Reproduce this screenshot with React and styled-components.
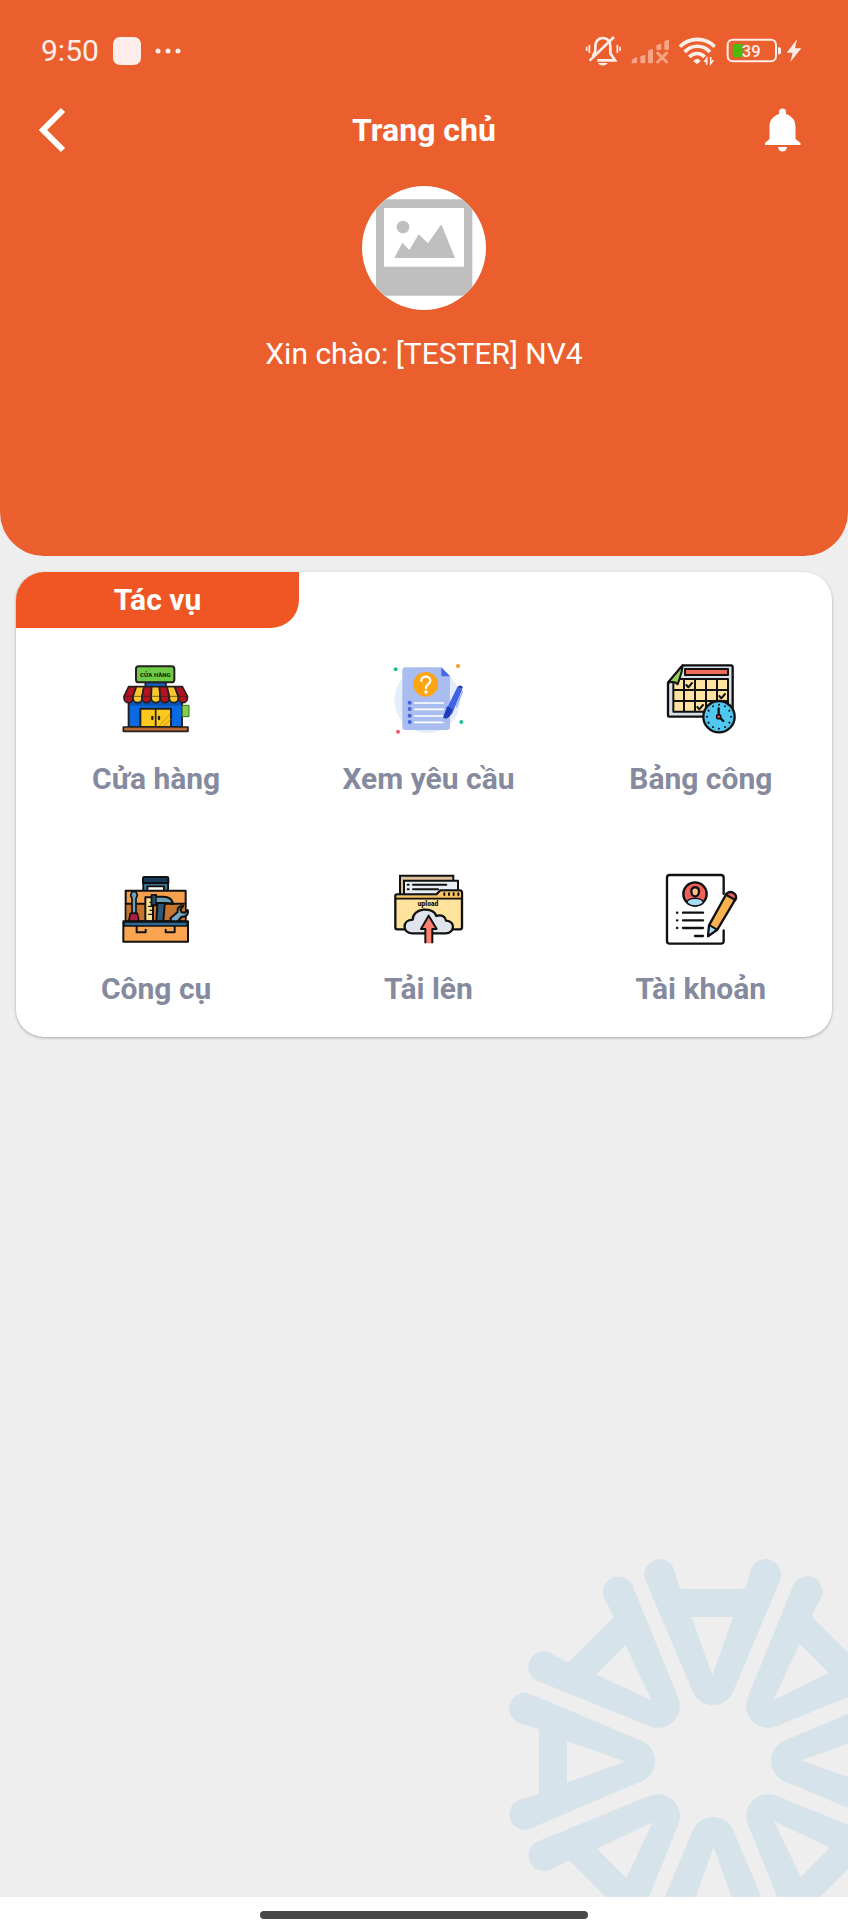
import React from 'react';
import styled, { createGlobalStyle } from 'styled-components';

const GlobalStyle = createGlobalStyle`
  * { box-sizing: border-box; }
  body {
    margin: 0;
    background: #eeeeee;
    font-family: Roboto, "Liberation Sans", sans-serif;
  }
  button { font: inherit; border: 0; padding: 0; background: none; cursor: pointer; }
  svg { display: block; }
`;

const Screen = styled.div`
  min-height: 100vh;
  display: flex;
  flex-direction: column;
`;

const Header = styled.header`
  background: #eb5f2f;
  color: #fff;
  border-radius: 0 0 44px 44px;
  padding-bottom: 182px;
`;

const StatusBar = styled.div`
  height: 101px;
  padding: 0 45px 0 41px;
  display: flex;
  align-items: center;
  justify-content: space-between;
  color: #fdeee9;
`;

const StatusGroup = styled.div`
  display: flex;
  align-items: center;
  gap: ${(p) => p.$gap}px;
`;

const Clock = styled.time`
  font-size: 30px;
  line-height: 40px;
`;

const AppChip = styled.span`
  width: 28px;
  height: 28px;
  border-radius: 7px;
  background: #fdeeeb;
`;

const AppBar = styled.div`
  height: 58px;
  padding: 0 36px;
  display: grid;
  grid-template-columns: 1fr auto 1fr;
  align-items: center;
`;

const BarButton = styled.button`
  color: #fff;
  justify-self: ${(p) => p.$side};
`;

const Title = styled.h1`
  margin: 0;
  font-size: 32px;
  line-height: 40px;
  font-weight: 700;
`;

const Profile = styled.div`
  margin-top: 27px;
  display: flex;
  flex-direction: column;
  align-items: center;
  gap: 24px;
`;

const Avatar = styled.div`
  width: 124px;
  height: 124px;
  border-radius: 50%;
  background: #fff;
  overflow: hidden;
`;

const Greeting = styled.p`
  margin: 0;
  font-size: 30px;
  line-height: 40px;
`;

const Main = styled.main`
  flex: 1;
  position: relative;
  padding: 16px 16px 40px;
`;

const Watermark = styled.svg`
  position: absolute;
  right: 0;
  bottom: 0;
`;

const Card = styled.section`
  position: relative;
  background: #fff;
  border-radius: 28px;
  overflow: hidden;
  box-shadow: 0 1px 3px rgba(0, 0, 0, 0.3);
`;

const CardTitle = styled.h2`
  margin: 0;
  width: 283px;
  background: #f05623;
  color: #fff;
  border-bottom-right-radius: 28px;
  text-align: center;
  font-size: 30px;
  line-height: 56px;
  font-weight: 700;
`;

const TaskGrid = styled.nav`
  display: grid;
  grid-template-columns: repeat(3, 1fr);
  row-gap: 66px;
  margin: 0 -5px 0 4px;
  padding: 27px 0 28px;
`;

const Task = styled.button`
  display: flex;
  flex-direction: column;
  align-items: center;
  gap: 14px;
  color: #858a9e;
  font-size: 30px;
  line-height: 40px;
  font-weight: 700;
`;

const HomeBar = styled.footer`
  height: 35px;
  background: #fff;
  display: flex;
  align-items: center;
  justify-content: center;
`;

const HomePill = styled.div`
  width: 328px;
  height: 8px;
  border-radius: 4px;
  background: #484848;
`;

const Glyph = ({ children }) => (
  <svg width="92" height="90" viewBox="0 0 276 270" aria-hidden="true" strokeLinecap="round" strokeLinejoin="round">
    {children}
  </svg>
);

const AWNING = ['#b5121f', '#fbc630', '#b5121f', '#fbc630', '#b5121f', '#fbc630', '#b5121f'];

const StoreIcon = () => (
  <Glyph>
    <path d="M106 82h62v16h-62z" fill="#1565c8" stroke="#23201f" strokeWidth="5" />
    <rect x="78" y="34" width="115" height="48" rx="8" fill="#6fcb45" stroke="#23201f" strokeWidth="6" />
    <text x="136" y="66" textAnchor="middle" fontSize="18" fontWeight="900" fill="#14300c">CỬA HÀNG</text>
    <path d="M56 130h160v86H56z" fill="#0a6be0" stroke="#23201f" strokeWidth="6" />
    <path d="M60 142h152v10H60z" fill="#0753b8" />
    {AWNING.map((c, i) => {
      const top = 56 + i * 23;
      const bottom = 42 + i * 27.2;
      return (
        <path
          key={i}
          d={`M${top} 95h23L${bottom + 27.2} 124v6a13.6 13 0 0 1-27.2 0v-6Z`}
          fill={c}
          stroke="#23201f"
          strokeWidth="5"
        />
      );
    })}
    <path d="M45 124h186" stroke="#23201f" strokeWidth="3" opacity=".6" />
    <rect x="91" y="161" width="92" height="55" fill="#fbc81e" stroke="#23201f" strokeWidth="6" />
    <path d="M137 161v55" stroke="#23201f" strokeWidth="5" />
    <path d="M150 210l28-30M162 212l18-18" stroke="#e5a911" strokeWidth="4" />
    <path d="M127 186v6M147 186v6" stroke="#23201f" strokeWidth="7" />
    <path d="M217 151h20v34h-20z" fill="#7ed04b" stroke="#3b6b21" strokeWidth="3" />
    <path d="M40 216h194v13H40z" fill="#b9692f" stroke="#23201f" strokeWidth="5" />
  </Glyph>
);

const RequestIcon = () => (
  <Glyph>
    <circle cx="136" cy="135" r="99" fill="#e4edfc" />
    <path d="M70 37h108l26 27v152q0 9-9 9H70q-9 0-9-9V46q0-9 9-9z" fill="#a9bdf0" />
    <path d="M178 37l26 27h-22q-4 0-4-4z" fill="#4169e6" />
    <circle cx="131" cy="88" r="37" fill="#ffa412" />
    <path d="M118 77c0-16 27-16 27 0 0 11-13 10-13 22" fill="none" stroke="#fff" strokeWidth="7" />
    <circle cx="132" cy="111" r="5" fill="#fff" />
    {[143, 162, 182, 201].map((y) => (
      <g key={y}>
        <circle cx="83" cy={y} r="6" fill="#4364dc" />
        <path d={`M98 ${y + 1}h86`} stroke="#fff" strokeWidth="5" />
      </g>
    ))}
    <path d="M241 110l-18 46" stroke="#91abf5" strokeWidth="4" />
    <path d="M226 96l15 7-31 74-24 14-3-5 12-26z" fill="#3e63e4" />
    <path d="M195 154l17 8-8 22-18 12-3-5z" fill="#203bb8" />
    <path d="M183 187l12 6-14 10z" fill="#9db6f6" />
    <path d="M226 97q4-9 14-4 3 2 1 9z" fill="#203bb8" />
    <circle cx="41" cy="43" r="6" fill="#20bd94" />
    <circle cx="228" cy="33" r="6" fill="#f49a26" />
    <circle cx="238" cy="201" r="6" fill="#20bd94" />
    <circle cx="48" cy="230" r="6" fill="#ea5c72" />
  </Glyph>
);

const TimesheetIcon = () => (
  <Glyph>
    <path d="M83 31h145q5 0 5 5v145q0 4-4 4H43q-4 0-4-4V83z" fill="#d9dfe8" stroke="#111" strokeWidth="7" />
    <path d="M90 42h129v18H90z" fill="#ed6a56" stroke="#111" strokeWidth="6" />
    <path d="M55 72h164v98H55z" fill="#ffe1a0" />
    <path d="M55 72h164v98H55zM87 72v98M120 72v98M153 72v98M186 72v98M55 105h164M55 138h164" fill="none" stroke="#111" strokeWidth="6" />
    <path d="M83 31c-2 26-10 40-15 57-6-9-15-9-29-5z" fill="#91d05c" stroke="#111" strokeWidth="6" />
    <path d="M94 90l6 7 11-13M193 123l6 7 11-13M127 156l6 7 11-13" fill="none" stroke="#111" strokeWidth="6" />
    <circle cx="192" cy="185" r="47" fill="#50c7ef" stroke="#111" strokeWidth="7" />
    {[0, 30, 60, 90, 120, 150, 180, 210, 240, 270, 300, 330].map((a) => (
      <circle key={a} cx="192" cy="149" r="3" fill="#111" transform={`rotate(${a} 192 185)`} />
    ))}
    <path d="M191 160v24l14 14" fill="none" stroke="#111" strokeWidth="7" />
    <circle cx="191" cy="185" r="6" fill="#ef6558" stroke="#111" strokeWidth="5" />
  </Glyph>
);

const ToolsIcon = () => (
  <Glyph>
    <path d="M106 76V58h62v18" fill="none" stroke="#111" strokeWidth="18" strokeLinecap="butt" strokeLinejoin="miter" />
    <path d="M106 76V58h62v18" fill="none" stroke="#3f7391" strokeWidth="7" strokeLinecap="butt" strokeLinejoin="miter" />
    <path d="M103 36h68q4 0 4 4v14H99V40q0-4 4-4z" fill="#173c5a" stroke="#111" strokeWidth="6" />
    <path d="M47 77h180v90H47z" fill="#f5a04e" stroke="#111" strokeWidth="6" />
    <path d="M50 116h174v50H50z" fill="#c8742f" />
    <path d="M47 116h180" stroke="#111" strokeWidth="6" />
    <path d="M106 97h23v72h-23z" fill="#fbe08b" stroke="#111" strokeWidth="6" />
    <path d="M120 112h9M116 124h13M120 136h9M116 148h13" stroke="#111" strokeWidth="4" />
    <path d="M66 145V101l-4-10 4-11h12l4 11-4 10v44z" fill="#6ea3ba" stroke="#111" strokeWidth="5" />
    <path d="M61 145h21l5 24H56z" fill="#b01c48" stroke="#111" strokeWidth="5" />
    <path d="M143 107h22l-5 62h-21z" fill="#2f5876" stroke="#111" strokeWidth="6" />
    <path d="M125 90h13v5h22c18 0 27 8 30 22-14-4-18-4-29-3h-23v7h-13z" fill="#6b9fb5" stroke="#111" strokeWidth="6" />
    <path d="M125 90h13v30h-13z" fill="#254e6b" stroke="#111" strokeWidth="4" />
    <path d="M181 160l22-19c-3-12 6-20 17-18l-9 10 4 9 10 1 8-8c4 13-7 22-18 20l-13 16h-17z" fill="#74aac2" stroke="#111" strokeWidth="6" />
    <path d="M40 169h194v61H40z" fill="#f9a552" stroke="#111" strokeWidth="6" />
    <path d="M42 171h190v12H42z" fill="#2e6796" stroke="#111" strokeWidth="5" />
    <path d="M80 185v17h27v-8M194 185v17h-27v-8" fill="none" stroke="#111" strokeWidth="6" />
  </Glyph>
);

const UploadIcon = () => (
  <Glyph>
    <path d="M54 32h160v70H54z" fill="#dfc09a" stroke="#111" strokeWidth="6" strokeLinejoin="miter" />
    <path d="M66 47h162v54H66z" fill="#e8eef5" stroke="#111" strokeWidth="6" strokeLinejoin="miter" />
    <path d="M93 59h100M77 59h3M77 73h3M93 73h75" stroke="#111" strokeWidth="6" />
    <path d="M45 88h119l11-12h58q7 0 7 7v104q0 6-6 6H46q-6 0-6-6V93q0-5 5-5z" fill="#ffe39c" stroke="#111" strokeWidth="7" />
    <path d="M44 92h122l11-12h59v19H44z" fill="#f9c35c" />
    <path d="M42 101h196" stroke="#111" strokeWidth="5" />
    <path d="M187 85v5M201 85v5M215 85v5M229 85v5" stroke="#111" strokeWidth="6" />
    <text x="138" y="123" textAnchor="middle" fontSize="20" fontWeight="900" fill="#111">upload</text>
    <path d="M90 205c-29 0-31-40 2-41 0-36 62-40 71-11 17-6 28 4 29 14 30 1 26 38-1 38z" fill="#dfe3ec" stroke="#111" strokeWidth="7" />
    <path d="M130 235v-43h-13l23-40 24 40h-13v43z" fill="#ff8070" />
    <path d="M130 235v-43h-13l23-40 24 40h-13v43" fill="none" stroke="#111" strokeWidth="6" strokeLinecap="butt" />
  </Glyph>
);

const AccountIcon = () => (
  <Glyph>
    <path d="M206 87V38q0-8-8-8H44q-8 0-8 8v190q0 8 8 8h154q8 0 8-8v-32" fill="#fff" stroke="#111" strokeWidth="7" />
    <circle cx="120" cy="87" r="35" fill="#f0605b" stroke="#111" strokeWidth="7" />
    <path d="M96 113c2-17 46-17 49 0-13 13-37 13-49 0z" fill="#a6dcf5" stroke="#111" strokeWidth="4" />
    <path d="M109 78c0-15 23-15 23 0 0 22-23 22-23 0z" fill="#ffc48b" stroke="#111" strokeWidth="7" />
    <path d="M66 143h1M66 166h1M66 189h1M84 143h60M84 166h60M84 189h60M120 213h24" stroke="#111" strokeWidth="7" />
    <path d="M214 87l27 16-54 91-27 18 2-31z" fill="#f9b24f" stroke="#111" strokeWidth="7" />
    <path d="M163 180l23 14-27 20z" fill="#a6dcf5" stroke="#111" strokeWidth="6" />
    <path d="M160 214l1-10 7 5z" fill="#111" />
    <path d="M213 89c9-18 39-3 28 16z" fill="#f0605b" stroke="#111" strokeWidth="7" />
  </Glyph>
);

const SilentIcon = () => (
  <svg width="37" height="36" viewBox="75 38 111 108" aria-hidden="true" fill="none" stroke="currentColor" strokeWidth="8">
    <path d="M80 79v13M88 74v24M172 74v24M180 79v13" strokeWidth="5" />
    <path d="M106 91V77c0-32 45-32 45 0v22l14 21H112M99 108l7-17" />
    <path d="M89 121l73-71" strokeWidth="8" />
    <path d="M114 128h29c-5 10-24 10-29 0z" fill="currentColor" stroke="none" />
  </svg>
);

const SignalIcon = () => (
  <svg width="40" height="36" viewBox="210 38 120 108" aria-hidden="true" fill="#f5a486">
    <path d="M215 129q-2-15 16-18v14q0 4-4 4zM241 108l11-4q4 0 4 4v17q0 4-4 4h-7q-4 0-4-4zM264 92l11-7q4 0 4 4v36q0 4-4 4h-7q-4 0-4-4zM289 75l11-5q4 0 4 4v11q0 4-4 4h-7q-4 0-4-4zM313 63l11-5q3 0 3 4v23q0 4-4 4h-6q-4 0-4-4z" />
    <path d="M293 98l27 27M320 98l-27 27" stroke="#f5a486" strokeWidth="9" strokeLinecap="round" />
  </svg>
);

const WifiIcon = () => (
  <svg width="39" height="36" viewBox="354 38 117 108" aria-hidden="true" fill="none" stroke="currentColor" strokeWidth="11">
    <path d="M360 79c28-29 76-29 104 0M374 95c21-23 55-23 76 0M388 110c13-14 33-14 46 0" />
    <path d="M400 122q11-14 22 0l-11 10z" fill="currentColor" stroke="none" />
    <path d="M440 133v-18l-7 10M452 110v20l8-10" strokeWidth="5" />
  </svg>
);

const BatteryIcon = () => (
  <svg width="78" height="36" viewBox="495 38 234 108" role="img" aria-label="39%">
    <rect x="503" y="58" width="145" height="65" rx="15" fill="none" stroke="currentColor" strokeWidth="6" />
    <path d="M524 71h24v40h-24q-6 0-6-6V77q0-6 6-6z" fill="#4db80f" />
    <path d="M654 81h4q5 0 5 5v11q0 5-5 5h-4z" fill="currentColor" />
    <text x="574" y="111" textAnchor="middle" fontSize="50" fontWeight="500" fill="currentColor">39</text>
    <path d="M711 57l-31 40h18l-7 28 33-41h-19z" fill="currentColor" />
  </svg>
);

const PETAL =
  'M-67.500-180.500A15 15 0 0 1-39-192L-34-175Q-33-172-30-172H29Q32-172 33-175L38-192A15 15 0 0 1 67-180.500L20.500-70A22 22 0 0 1-20.500-70ZM-21.500-144L-.500-86 20-144Z';

const PETALS = [
  { angle: 0, reach: 0 },
  { angle: 45, reach: 0 },
  { angle: 90, reach: 2 },
  { angle: 135, reach: 0 },
  { angle: 180, reach: 0 },
  { angle: 225, reach: 0 },
  { angle: 270, reach: 2 },
  { angle: 315, reach: 0 },
];

const Flower = () => (
  <Watermark width="348" height="344" viewBox="-213 -208 348 344" fill="#d7e3ea" fillRule="evenodd" aria-hidden="true">
    {PETALS.map(({ angle, reach }) => (
      <path key={angle} d={PETAL} transform={`rotate(${angle}) translate(0 ${-reach})`} />
    ))}
  </Watermark>
);

const TASKS = [
  { label: 'Cửa hàng', Icon: StoreIcon },
  { label: 'Xem yêu cầu', Icon: RequestIcon },
  { label: 'Bảng công', Icon: TimesheetIcon },
  { label: 'Công cụ', Icon: ToolsIcon },
  { label: 'Tải lên', Icon: UploadIcon },
  { label: 'Tài khoản', Icon: AccountIcon },
];

export default function App() {
  return (
    <Screen>
      <GlobalStyle />
      <Header>
        <StatusBar>
          <StatusGroup $gap={14}>
            <Clock>9:50</Clock>
            <AppChip />
            <svg width="26" height="6" viewBox="0 0 26 6" fill="currentColor" aria-hidden="true">
              <circle cx="3" cy="3" r="2.500" />
              <circle cx="13" cy="3" r="2.500" />
              <circle cx="23" cy="3" r="2.500" />
            </svg>
          </StatusGroup>
          <StatusGroup $gap={8}>
            <SilentIcon />
            <SignalIcon />
            <WifiIcon />
            <BatteryIcon />
          </StatusGroup>
        </StatusBar>
        <AppBar>
          <BarButton $side="start" aria-label="Quay lại">
            <svg width="32" height="48" viewBox="0 0 32 48" fill="none" stroke="currentColor" strokeWidth="6">
              <path d="M27 4L7 24l20 20" />
            </svg>
          </BarButton>
          <Title>Trang chủ</Title>
          <BarButton $side="end" aria-label="Thông báo">
            <svg width="52" height="48" viewBox="0 0 52 48" fill="currentColor">
              <path d="M19 8V6a3.500 3.500 0 0 1 7 0v2c6 2 9.500 6 9.500 13v12l5 4v2H5v-2l4.500-4V21c0-7 3.500-11 9.500-13z" />
              <path d="M18 41h9c-.500 6-8.500 6-9 0z" />
            </svg>
          </BarButton>
        </AppBar>
        <Profile>
          <Avatar>
            <svg width="124" height="124" viewBox="0 0 372 372" fill="#bfbfbf" aria-hidden="true">
              <path d="M42 40h289v289H42z" />
              <path d="M66 66h240v176H66z" fill="#fff" />
              <circle cx="123" cy="123" r="19" />
              <path d="M97 216l24-46 21 22 28-47 28 27 40-57 41 101z" />
            </svg>
          </Avatar>
          <Greeting>Xin chào: [TESTER] NV4</Greeting>
        </Profile>
      </Header>
      <Main>
        <Flower />
        <Card>
          <CardTitle>Tác vụ</CardTitle>
          <TaskGrid>
            {TASKS.map(({ label, Icon }) => (
              <Task key={label}>
                <Icon />
                {label}
              </Task>
            ))}
          </TaskGrid>
        </Card>
      </Main>
      <HomeBar>
        <HomePill />
      </HomeBar>
    </Screen>
  );
}
